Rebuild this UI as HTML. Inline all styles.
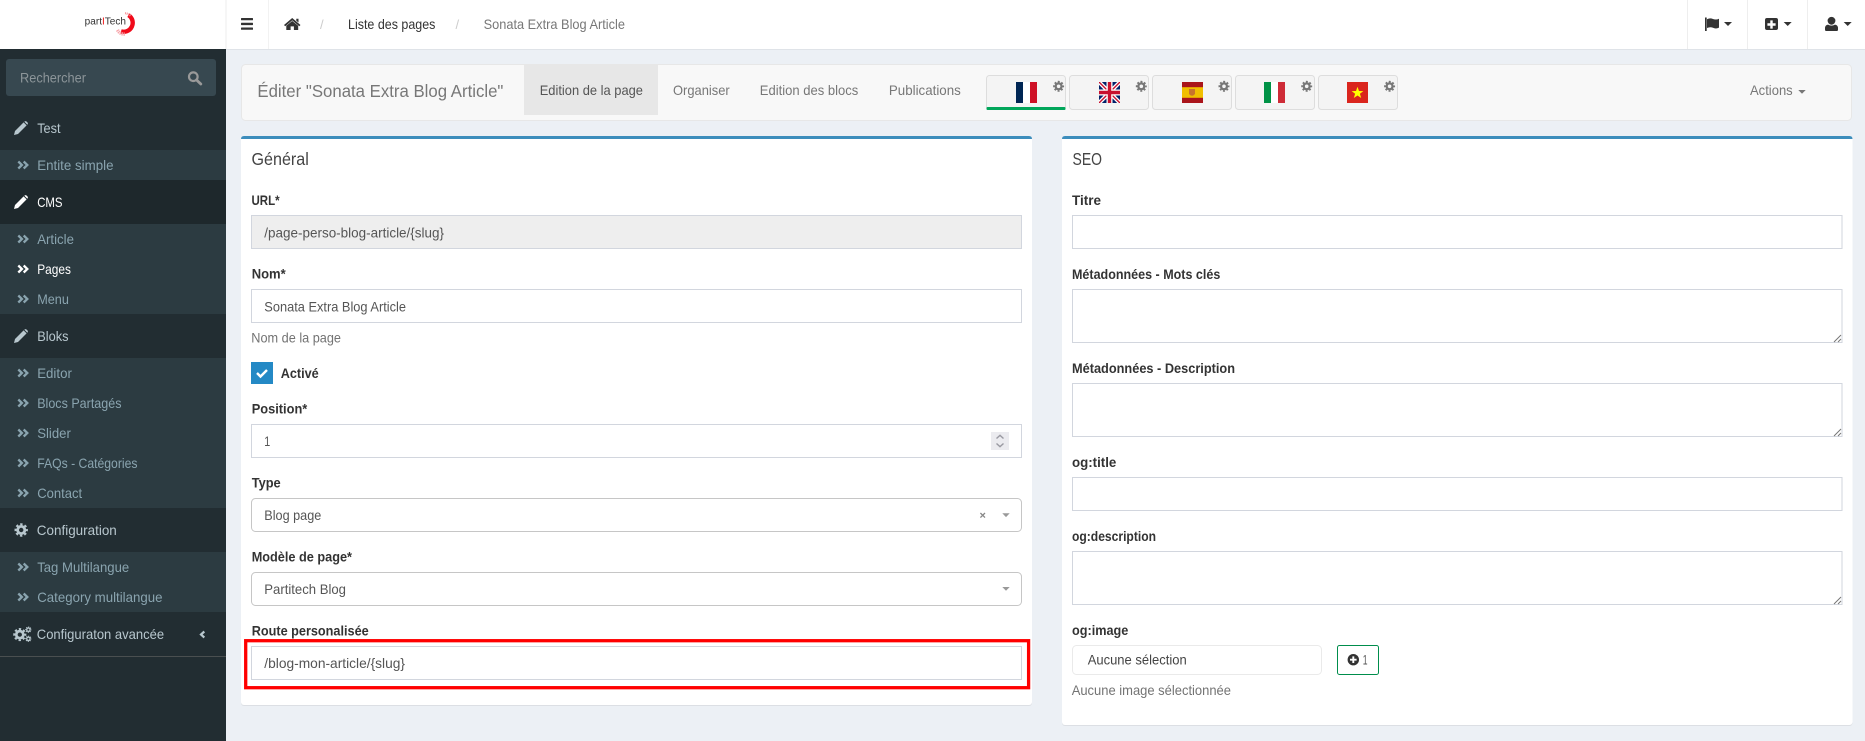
<!DOCTYPE html>
<html lang="fr">
<head>
<meta charset="utf-8">
<title>Éditer Sonata Extra Blog Article</title>
<style>
html,body{margin:0;padding:0;background:#ecf0f5;width:1865px;height:741px;overflow:hidden}
svg{display:block}
text{font-family:"Liberation Sans",sans-serif;font-size:14px;white-space:pre}
.b{font-weight:700;fill:#333}
.s{fill:#8aa4af}
.m{fill:#b8c7ce}
.i{fill:#555}
.h{fill:#737373}
.n{fill:#777}
.big{font-size:17.5px}
.f{fill:#fff;stroke:#d2d6de;stroke-width:1}
.sel{fill:#fff;stroke:#c6c6c6;stroke-width:1}
</style>
</head>
<body>
<svg xmlns="http://www.w3.org/2000/svg" width="1865" height="741" viewBox="0 0 1865 741">
<defs>
<g id="dbl" fill="none" stroke="currentColor" stroke-width="2.3">
<polyline points="1,1 4.6,4.5 1,8"/><polyline points="6.4,1 10,4.5 6.4,8"/>
</g>
<g id="pen" fill="currentColor">
<path d="M0 14 L1 10 L9.6 1.4 L12.6 4.4 L4 13 Z"/>
<path d="M10.6 .5 Q11.6 -.3 12.5 .5 L13.6 1.6 Q14.3 2.5 13.6 3.4 L13.3 3.7 L10.3 .8 Z"/>
</g>
<g id="gear" fill="none" stroke="currentColor">
<circle r="3.6" stroke-width="2.8"/>
<circle r="5.7" stroke-width="2" stroke-dasharray="2.4 2.077" stroke-dashoffset="1.2"/>
</g>
</defs>

<rect width="1865" height="741" fill="#ecf0f5"/>

<!-- top bar -->
<rect width="1865" height="49" fill="#fff"/>
<rect y="49" width="1865" height="1" fill="#dfe3e8"/>
<rect x="225.5" width="1" height="49" fill="#eee"/>
<rect x="268" width="1" height="49" fill="#f2f2f2"/>
<rect x="1687" width="1" height="49" fill="#eee"/>
<rect x="1747" width="1" height="49" fill="#eee"/>
<rect x="1807" width="1" height="49" fill="#eee"/>

<!-- logo -->
<path d="M128.5 15.2 A9 9 0 0 1 121 31.4" fill="none" stroke="#f00a1a" stroke-width="4.4"/>
<path d="M117.5 30 Q120 34.5 125 34" fill="none" stroke="#f7a0a6" stroke-width="3.4" stroke-dasharray="1.2 .7"/>
<path d="M125 13.2 Q128 13.5 131 16" fill="none" stroke="#f7959b" stroke-width="2.2" stroke-dasharray="1 .7"/>
<text x="84.7" y="24.7" textLength="41.3" lengthAdjust="spacingAndGlyphs" style="font-size:10px" fill="#333">part<tspan fill="#e11">I</tspan>Tech</text>

<!-- hamburger -->
<g fill="#333"><rect x="241" y="18" width="12" height="2.3" rx=".6"/><rect x="241" y="22.8" width="12" height="2.3" rx=".6"/><rect x="241" y="27.5" width="12" height="2.3" rx=".6"/></g>
<!-- home -->
<path fill="#333" d="M292.2 18 L300.5 25 L299.3 26.3 L292.2 20.4 L285.2 26.3 L284 25 Z M296.3 18.8 h2.2 v3.7 l-2.2 -1.8 Z M286.3 25.8 L292.2 21 L298.2 25.8 V30 H293.9 V26.4 H290.6 V30 H286.3 Z"/>
<text x="320" y="29" fill="#ccc" style="font-size:13px">/</text>
<text x="348" y="29" textLength="87.4" lengthAdjust="spacingAndGlyphs" fill="#333">Liste des pages</text>
<text x="455.5" y="29" fill="#ccc" style="font-size:13px">/</text>
<text x="483.6" y="29" textLength="141.4" lengthAdjust="spacingAndGlyphs" fill="#777">Sonata Extra Blog Article</text>

<!-- top right icons -->
<g fill="#333">
<path d="M1705 17.5 h1.7 V31 H1705 Z M1707 19.2 Q1710 17.6 1713 19 Q1716 20.2 1719 18.8 V27.6 Q1716 29.2 1713 27.8 Q1710 26.6 1707 28 Z"/>
<path d="M1724 22 h8 l-4 4 Z"/>
<path fill-rule="evenodd" d="M1767 18 h9 a2 2 0 0 1 2 2 v8 a2 2 0 0 1 -2 2 h-9 a2 2 0 0 1 -2 -2 v-8 a2 2 0 0 1 2 -2 Z M1770.3 20.4 v2.9 h-2.9 v2.4 h2.9 v2.9 h2.4 v-2.9 h2.9 v-2.4 h-2.9 v-2.9 Z"/>
<path d="M1783.7 22 h8 l-4 4 Z"/>
<circle cx="1831.5" cy="20.8" r="3.9"/>
<path d="M1825 28.2 Q1825 25 1828 24.6 Q1831.5 26.6 1835 24.6 Q1838 25 1838 28.2 V29.6 Q1838 31 1836.6 31 H1826.4 Q1825 31 1825 29.6 Z"/>
<path d="M1843.7 22 h8 l-4 4 Z"/>
</g>

<!-- sidebar -->
<rect y="49" width="226" height="692" fill="#222d32"/>
<rect x="6" y="59" width="210" height="37" rx="3" fill="#374850"/>
<text x="20" y="82.5" textLength="66" lengthAdjust="spacingAndGlyphs" fill="#8c9599">Rechercher</text>
<circle cx="193.3" cy="76.7" r="4.3" fill="none" stroke="#999" stroke-width="2.2"/>
<line x1="196.6" y1="80" x2="200.8" y2="84" stroke="#999" stroke-width="2.8" stroke-linecap="round"/>

<rect y="150" width="226" height="30" fill="#2c3b41"/>
<rect y="180" width="226" height="44" fill="#1e282c"/>
<rect y="224" width="226" height="90" fill="#2c3b41"/>
<rect y="358" width="226" height="150" fill="#2c3b41"/>
<rect y="552" width="226" height="60" fill="#2c3b41"/>
<rect y="656" width="226" height="1" fill="#4a4f50"/>

<use href="#pen" x="14" y="121" color="#b8c7ce"/>
<text x="37.2" y="133" textLength="23.3" lengthAdjust="spacingAndGlyphs" class="m">Test</text>
<use href="#dbl" x="17.3" y="160.5" color="#8aa4af"/>
<text x="37.2" y="170" textLength="76.3" lengthAdjust="spacingAndGlyphs" class="s">Entite simple</text>
<use href="#pen" x="14" y="195" color="#fff"/>
<text x="37.2" y="207" textLength="25.3" lengthAdjust="spacingAndGlyphs" fill="#fff">CMS</text>
<use href="#dbl" x="17.3" y="234.5" color="#8aa4af"/>
<text x="37.2" y="244" textLength="36.8" lengthAdjust="spacingAndGlyphs" class="s">Article</text>
<use href="#dbl" x="17.3" y="264.5" color="#fff"/>
<text x="37.2" y="274" textLength="33.7" lengthAdjust="spacingAndGlyphs" fill="#fff">Pages</text>
<use href="#dbl" x="17.3" y="294.5" color="#8aa4af"/>
<text x="37.2" y="304" textLength="31.7" lengthAdjust="spacingAndGlyphs" class="s">Menu</text>
<use href="#pen" x="14" y="329" color="#b8c7ce"/>
<text x="37.2" y="341" textLength="31.3" lengthAdjust="spacingAndGlyphs" class="m">Bloks</text>
<use href="#dbl" x="17.3" y="368.5" color="#8aa4af"/>
<text x="37.2" y="378" textLength="34.7" lengthAdjust="spacingAndGlyphs" class="s">Editor</text>
<use href="#dbl" x="17.3" y="398.5" color="#8aa4af"/>
<text x="37.2" y="408" textLength="84.3" lengthAdjust="spacingAndGlyphs" class="s">Blocs Partagés</text>
<use href="#dbl" x="17.3" y="428.5" color="#8aa4af"/>
<text x="37.2" y="438" textLength="33.7" lengthAdjust="spacingAndGlyphs" class="s">Slider</text>
<use href="#dbl" x="17.3" y="458.5" color="#8aa4af"/>
<text x="37.2" y="468" textLength="100.3" lengthAdjust="spacingAndGlyphs" class="s">FAQs - Catégories</text>
<use href="#dbl" x="17.3" y="488.5" color="#8aa4af"/>
<text x="37.2" y="498" textLength="45" lengthAdjust="spacingAndGlyphs" class="s">Contact</text>
<use href="#gear" x="21.2" y="530" color="#b8c7ce"/>
<text x="36.8" y="535" textLength="80" lengthAdjust="spacingAndGlyphs" class="m">Configuration</text>
<use href="#dbl" x="17.3" y="562.5" color="#8aa4af"/>
<text x="37.2" y="572" textLength="92" lengthAdjust="spacingAndGlyphs" class="s">Tag Multilangue</text>
<use href="#dbl" x="17.3" y="592.5" color="#8aa4af"/>
<text x="37.2" y="602" textLength="125.3" lengthAdjust="spacingAndGlyphs" class="s">Category multilangue</text>
<g color="#b8c7ce">
<use href="#gear" x="0" y="0" transform="translate(19.8 634.6) scale(.98)"/>
<use href="#gear" x="0" y="0" transform="translate(28.4 629.7) scale(.47)"/>
<use href="#gear" x="0" y="0" transform="translate(28.4 638.8) scale(.47)"/>
</g>
<text x="36.8" y="639" textLength="127.3" lengthAdjust="spacingAndGlyphs" class="m">Configuraton avancée</text>
<polyline points="204.3,631.5 201,634.5 204.3,637.5" fill="none" stroke="#b8c7ce" stroke-width="2.2"/>

<!-- navbar -->
<rect x="241.5" y="64.5" width="1610" height="56" rx="4" fill="#f8f8f8" stroke="#e7e7e7"/>
<text x="257.4" y="97" textLength="246" lengthAdjust="spacingAndGlyphs" class="big n">Éditer "Sonata Extra Blog Article"</text>
<rect x="524" y="65" width="134" height="50" fill="#e7e7e7"/>
<text x="539.7" y="95" textLength="103.3" lengthAdjust="spacingAndGlyphs" fill="#555">Edition de la page</text>
<text x="673" y="95" textLength="56.7" lengthAdjust="spacingAndGlyphs" class="n">Organiser</text>
<text x="759.8" y="95" textLength="98.5" lengthAdjust="spacingAndGlyphs" class="n">Edition des blocs</text>
<text x="888.9" y="95" textLength="71.9" lengthAdjust="spacingAndGlyphs" class="n">Publications</text>
<text x="1750" y="95" textLength="42.7" lengthAdjust="spacingAndGlyphs" class="n">Actions</text>
<path d="M1798.3 90 h7.4 l-3.7 3.8 Z" fill="#777"/>

<!-- language tabs -->
<g fill="#f4f4f4" stroke="#ddd">
<rect x="986.5" y="75.5" width="79" height="34" rx="3"/>
<rect x="1069.5" y="75.5" width="79" height="34" rx="3"/>
<rect x="1152.5" y="75.5" width="79" height="34" rx="3"/>
<rect x="1235.5" y="75.5" width="79" height="34" rx="3"/>
<rect x="1318.5" y="75.5" width="79" height="34" rx="3"/>
</g>
<rect x="986.5" y="107" width="79" height="3" rx="1" fill="#00a65a"/>
<!-- FR -->
<rect x="1016" y="82" width="7" height="21" fill="#002654"/><rect x="1023" y="82" width="7" height="21" fill="#fff"/><rect x="1030" y="82" width="7" height="21" fill="#ce1126"/>
<!-- UK -->
<svg x="1099" y="82" width="21" height="21" viewBox="0 0 21 21">
<rect width="21" height="21" fill="#012169"/>
<path d="M0 0 L21 21 M21 0 L0 21" stroke="#fff" stroke-width="4"/>
<path d="M0 0 L21 21 M21 0 L0 21" stroke="#c8102e" stroke-width="1.4"/>
<path d="M10.5 0 V21 M0 10.5 H21" stroke="#fff" stroke-width="6"/>
<path d="M10.5 0 V21 M0 10.5 H21" stroke="#c8102e" stroke-width="3.4"/>
</svg>
<!-- ES -->
<rect x="1182" y="82" width="21" height="21" fill="#aa151b"/><rect x="1182" y="87.2" width="21" height="10.6" fill="#f1bf00"/>
<path d="M1189 89 h6 v5 q-3 3.5 -6 0 Z" fill="#c8742c"/>
<!-- IT -->
<rect x="1264" y="82" width="7" height="21" fill="#009246"/><rect x="1271" y="82" width="7" height="21" fill="#fff"/><rect x="1278" y="82" width="7" height="21" fill="#ce2b37"/>
<!-- VN -->
<rect x="1347" y="82" width="21" height="21" fill="#da251d"/>
<polygon points="1357.5,86.8 1359,91 1363.4,91.1 1359.9,93.8 1361.2,98 1357.5,95.5 1353.8,98 1355.1,93.8 1351.6,91.1 1356,91" fill="#ff0"/>
<!-- tab gears -->
<g color="#777">
<use href="#gear" transform="translate(1058.6 86.3) scale(.82)"/>
<use href="#gear" transform="translate(1141.3 86.3) scale(.82)"/>
<use href="#gear" transform="translate(1224 86.3) scale(.82)"/>
<use href="#gear" transform="translate(1306.7 86.3) scale(.82)"/>
<use href="#gear" transform="translate(1389.6 86.3) scale(.82)"/>
</g>

<!-- left box -->
<rect x="241" y="137" width="791" height="569" rx="3" fill="#dcdfe4"/>
<rect x="241" y="136" width="791" height="569" rx="3" fill="#fff"/>
<path d="M241 139 V139 Q241 136 244 136 H1029 Q1032 136 1032 139 Z" fill="#3c8dbc"/>
<text x="251.5" y="165" textLength="57.3" lengthAdjust="spacingAndGlyphs" class="big" fill="#444">Général</text>

<text x="251.5" y="205" textLength="28.1" lengthAdjust="spacingAndGlyphs" class="b">URL*</text>
<rect x="251.5" y="215.5" width="770" height="33" fill="#eee" stroke="#d2d6de"/>
<text x="264.3" y="237.3" textLength="179.7" lengthAdjust="spacingAndGlyphs" class="i">/page-perso-blog-article/{slug}</text>

<text x="251.7" y="278.3" textLength="34" lengthAdjust="spacingAndGlyphs" class="b">Nom*</text>
<rect x="251.5" y="289.5" width="770" height="33" class="f"/>
<text x="264.3" y="311.3" textLength="141.7" lengthAdjust="spacingAndGlyphs" class="i">Sonata Extra Blog Article</text>
<text x="251.3" y="342.7" textLength="89.7" lengthAdjust="spacingAndGlyphs" class="h">Nom de la page</text>

<rect x="251" y="362" width="22" height="22" fill="#2489c5"/>
<polyline points="257,373 260.5,376.5 267,370" fill="none" stroke="#fff" stroke-width="2.4"/>
<text x="280.7" y="378" textLength="38" lengthAdjust="spacingAndGlyphs" class="b">Activé</text>

<text x="251.7" y="413.7" textLength="55.6" lengthAdjust="spacingAndGlyphs" class="b">Position*</text>
<rect x="251.5" y="424.5" width="770" height="33" class="f"/>
<text x="264.3" y="446" textLength="6" lengthAdjust="spacingAndGlyphs" class="i">1</text>
<rect x="991" y="432" width="18" height="18" fill="#ebebef"/>
<polyline points="996.5,438.5 1000,435.3 1003.5,438.5" fill="none" stroke="#9a9aa2" stroke-width="1.4"/>
<polyline points="996.5,443.5 1000,446.7 1003.5,443.5" fill="none" stroke="#9a9aa2" stroke-width="1.4"/>

<text x="251.7" y="487.7" textLength="29" lengthAdjust="spacingAndGlyphs" class="b">Type</text>
<rect x="251.5" y="498.5" width="770" height="33" rx="4" class="sel"/>
<text x="264.3" y="520" textLength="57" lengthAdjust="spacingAndGlyphs" class="i">Blog page</text>
<path d="M980.4 513 L985 517.6 M985 513 L980.4 517.6" stroke="#888" stroke-width="1.3"/>
<path d="M1002.3 513.3 h7.4 l-3.7 3.8 Z" fill="#999"/>

<text x="251.7" y="561.7" textLength="100.3" lengthAdjust="spacingAndGlyphs" class="b">Modèle de page*</text>
<rect x="251.5" y="572.5" width="770" height="33" rx="4" class="sel"/>
<text x="264.3" y="594" textLength="81.7" lengthAdjust="spacingAndGlyphs" class="i">Partitech Blog</text>
<path d="M1002.3 587 h7.4 l-3.7 3.8 Z" fill="#999"/>

<text x="251.7" y="635.7" textLength="117" lengthAdjust="spacingAndGlyphs" class="b">Route personalisée</text>
<rect x="251.5" y="646.5" width="770" height="33" class="f"/>
<text x="264.3" y="668" textLength="140.7" lengthAdjust="spacingAndGlyphs" class="i">/blog-mon-article/{slug}</text>
<rect x="245.7" y="640.7" width="782.9" height="47" fill="none" stroke="#f00" stroke-width="3.3"/>

<!-- right box -->
<rect x="1062" y="137" width="790.5" height="589" rx="3" fill="#dcdfe4"/>
<rect x="1062" y="136" width="790.5" height="589" rx="3" fill="#fff"/>
<path d="M1062 139 Q1062 136 1065 136 H1849.5 Q1852.5 136 1852.5 139 Z" fill="#3c8dbc"/>
<text x="1072.5" y="165" textLength="29.5" lengthAdjust="spacingAndGlyphs" class="big" fill="#444">SEO</text>

<text x="1072" y="205" textLength="29" lengthAdjust="spacingAndGlyphs" class="b">Titre</text>
<rect x="1072.5" y="215.5" width="769.5" height="33" class="f"/>

<text x="1072" y="279" textLength="148.3" lengthAdjust="spacingAndGlyphs" class="b">Métadonnées - Mots clés</text>
<rect x="1072.5" y="289.5" width="769.5" height="53" class="f"/>
<path d="M1841 335 L1834 342 M1841 339 L1838 342" stroke="#777" stroke-width="1"/>

<text x="1072" y="373" textLength="163" lengthAdjust="spacingAndGlyphs" class="b">Métadonnées - Description</text>
<rect x="1072.5" y="383.5" width="769.5" height="53" class="f"/>
<path d="M1841 429 L1834 436 M1841 433 L1838 436" stroke="#777" stroke-width="1"/>

<text x="1072" y="467" textLength="44.3" lengthAdjust="spacingAndGlyphs" class="b">og:title</text>
<rect x="1072.5" y="477.5" width="769.5" height="33" class="f"/>

<text x="1072" y="541" textLength="84" lengthAdjust="spacingAndGlyphs" class="b">og:description</text>
<rect x="1072.5" y="551.5" width="769.5" height="53" class="f"/>
<path d="M1841 597 L1834 604 M1841 601 L1838 604" stroke="#777" stroke-width="1"/>

<text x="1072" y="635" textLength="56.3" lengthAdjust="spacingAndGlyphs" class="b">og:image</text>
<rect x="1072.5" y="645.5" width="249" height="29" rx="4" fill="#fff" stroke="#eaeaea"/>
<text x="1087.7" y="664.7" textLength="99" lengthAdjust="spacingAndGlyphs" fill="#444">Aucune sélection</text>
<rect x="1337.5" y="645.5" width="41" height="29" rx="2" fill="#fff" stroke="#008d4c"/>
<circle cx="1353.3" cy="659.7" r="5.7" fill="#333"/>
<path d="M1350 659.7 h6.6 M1353.3 656.4 v6.6" stroke="#fff" stroke-width="1.9"/>
<text x="1362.7" y="664.7" textLength="4.8" lengthAdjust="spacingAndGlyphs" class="i">1</text>
<text x="1071.7" y="695" textLength="159.3" lengthAdjust="spacingAndGlyphs" class="h">Aucune image sélectionnée</text>
</svg>
</body>
</html>
